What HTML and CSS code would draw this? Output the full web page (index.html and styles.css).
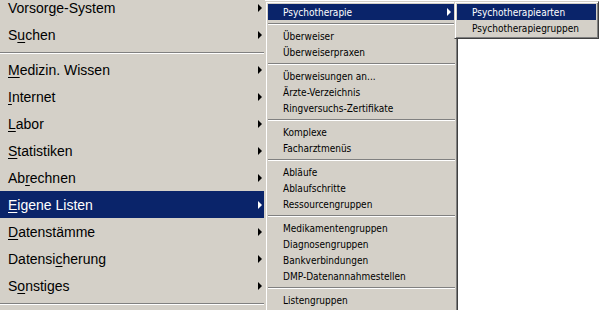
FILE: index.html
```html
<!DOCTYPE html>
<html lang="de">
<head>
  <meta charset="UTF-8">
  <title>Eigene Listen</title>
  <link rel="stylesheet" href="styles.css">
</head>
<body>
  <div class="screen">
    <!-- main menu (scrolled, top cut off) -->
    <div class="menu main">
      <div class="item">Vorsor<u>g</u>e-System<span class="arrow"></span></div>
      <div class="item">S<u>u</u>chen<span class="arrow"></span></div>
      <div class="sep"></div>
      <div class="item"><u>M</u>edizin. Wissen<span class="arrow"></span></div>
      <div class="item"><u>I</u>nternet<span class="arrow"></span></div>
      <div class="item"><u>L</u>abor<span class="arrow"></span></div>
      <div class="item"><u>S</u>tatistiken<span class="arrow"></span></div>
      <div class="item">Ab<u>r</u>echnen<span class="arrow"></span></div>
      <div class="item active"><u>E</u>igene Listen<span class="arrow"></span></div>
      <div class="item"><u>D</u>atenstämme<span class="arrow"></span></div>
      <div class="item">Datensi<u>c</u>herung<span class="arrow"></span></div>
      <div class="item">S<u>o</u>nstiges<span class="arrow"></span></div>
      <div class="sep"></div>
    </div>

    <!-- Eigene Listen submenu -->
    <div class="menu popup sub">
      <div class="item active">Psychotherapie<span class="arrow"></span></div>
      <div class="sep"></div>
      <div class="item">Überweiser</div>
      <div class="item">Überweiserpraxen</div>
      <div class="sep"></div>
      <div class="item">Überweisungen an...</div>
      <div class="item">Ärzte-Verzeichnis</div>
      <div class="item">Ringversuchs-Zertifikate</div>
      <div class="sep"></div>
      <div class="item">Komplexe</div>
      <div class="item">Facharztmenüs</div>
      <div class="sep"></div>
      <div class="item">Abläufe</div>
      <div class="item">Ablaufschritte</div>
      <div class="item">Ressourcengruppen</div>
      <div class="sep"></div>
      <div class="item">Medikamentengruppen</div>
      <div class="item">Diagnosengruppen</div>
      <div class="item">Bankverbindungen</div>
      <div class="item">DMP-Datenannahmestellen</div>
      <div class="sep"></div>
      <div class="item">Listengruppen</div>
    </div>

    <!-- Psychotherapie submenu -->
    <div class="menu popup third">
      <div class="item active">Psychotherapiearten</div>
      <div class="item">Psychotherapiegruppen</div>
    </div>
  </div>
</body>
</html>
```

FILE: styles.css
```css
body {
  margin: 0;
  background: #fff;
}

.screen {
  display: flex;
  align-items: flex-start;
  height: 310px;
  overflow: hidden;
}

.menu {
  background: #d4d0c8;
  color: #000;
  box-sizing: border-box;
  flex-shrink: 0;
}

.item {
  display: flex;
  align-items: center;
  white-space: nowrap;
}

.item.active {
  background: #0a246a;
  color: #fff;
}

.arrow {
  margin-left: auto;
  width: 0;
  height: 0;
  border-left: 4px solid #000;
  border-top: 4px solid transparent;
  border-bottom: 4px solid transparent;
}

.item.active .arrow {
  border-left-color: #fff;
}

.sep::before {
  content: "";
  display: block;
  border-top: 1px solid #808080;
  border-bottom: 1px solid #fff;
}

/* main menu */
.main {
  width: 265px;
  height: 330px;
  margin-top: -6px;
  padding-right: 1px;
  font-family: "Liberation Sans", Arial, sans-serif;
  font-size: 14px;
}

.main .item {
  height: 27px;
  padding: 0 2px 0 8px;
}

.main .item u {
  text-underline-offset: 2px;
}

.main .sep {
  height: 8px;
  padding-top: 4px;
  box-sizing: border-box;
}

/* popup menus */
.popup {
  border: 1px solid;
  border-color: #d4d0c8 #404040 #404040 #d4d0c8;
  box-shadow: inset 1px 1px #fff, inset -1px -1px #808080;
  padding: 2px;
  margin-top: 1px;
  font-family: "DejaVu Sans Condensed", "DejaVu Sans", sans-serif;
  font-stretch: condensed;
  font-size: 10px;
}

.popup .item {
  height: 16px;
  padding: 0 4px 0 15px;
}

.popup .sep {
  height: 8px;
  padding-top: 3px;
  box-sizing: border-box;
}

.sub {
  width: 193px;
  height: 330px;
}

.third {
  width: 145px;
  margin-left: -4px;
}
```
